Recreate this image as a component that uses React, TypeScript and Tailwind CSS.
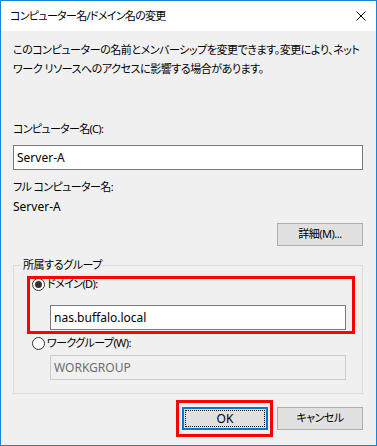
import React from "react";

const font = "[font-family:'Noto_Sans','Noto_Sans_CJK_JP',sans-serif] [font-feature-settings:'palt']";

const Radio = ({ checked }: { checked?: boolean }) => (
  <span className="flex h-[13px] w-[13px] shrink-0 items-center justify-center rounded-full border border-[#333333] bg-white">
    {checked && <span className="h-[7px] w-[7px] rounded-full bg-[#333333]" />}
  </span>
);

const WinButton = ({ children, isDefault }: { children: React.ReactNode; isDefault?: boolean }) =>
  isDefault ? (
    <div className="flex h-[23px] w-[86px] border-2 border-[#0078d7] bg-[#e1e1e1] p-[1px]">
      <div className="flex flex-1 items-center justify-center border border-dotted border-black text-[12px]">
        {children}
      </div>
    </div>
  ) : (
    <div className="flex h-[23px] w-[86px] items-center justify-center border border-[#adadad] bg-[#e1e1e1] tracking-[-0.5px]">
      {children}
    </div>
  );

export default function App() {
  return (
    <div className={`${font} flex h-[446px] w-[377px] flex-col border border-[#1883d7] bg-[#f0f0f0] text-[11px] text-black`}>
      <div className="flex h-[30px] shrink-0 items-center justify-between bg-white pl-[9px] pr-[9px]">
        <span className="leading-[16px] tracking-[-0.7px]">コンピューター名/ドメイン名の変更</span>
        <svg width="10" height="10" viewBox="0 0 10 10" className="mr-[1px]">
          <path d="M0.5 0.5 L9.5 9.5 M9.5 0.5 L0.5 9.5" stroke="#000" strokeWidth="1" />
        </svg>
      </div>

      <div className="flex flex-1 flex-col pl-[12px] pr-[13px]">
        <p className="whitespace-nowrap pt-[9px] leading-[19px] tracking-[-0.45px]">
          このコンピューターの名前とメンバーシップを変更できます。変更により、ネット
          <br />
          ワーク リソースへのアクセスに影響する場合があります。
        </p>

        <div className="mt-[43px] leading-[16px] tracking-[-0.7px]">コンピューター名(C):</div>
        <div className="mt-[8px] flex h-[25px] items-center border border-[#7a7a7a] bg-white pl-[3px] text-[12px]">Server-A</div>

        <div className="mt-[9px] leading-[16px] tracking-[-0.6px]">フル コンピューター名:</div>
        <div className="mt-[4px] text-[12px] leading-[16px]">Server-A</div>

        <div className="mt-[8px] flex justify-end">
          <WinButton>詳細(M)...</WinButton>
        </div>

        <div className="relative mt-[19px] border border-[#dcdcdc] pb-[13px] pl-[18px] pt-[10px]">
          <span className="absolute -top-[9px] left-[8px] bg-[#f0f0f0] px-[1px] leading-[16px] tracking-[-0.4px]">所属するグループ</span>

          <div className="flex h-[16px] items-center gap-[2px]">
            <Radio checked />
            <span className="leading-[16px] tracking-[-0.6px]">ドメイン(D):</span>
          </div>
          <div className="ml-[18px] mr-[16px] mt-[13px] flex h-[25px] items-center border border-[#7a7a7a] bg-white pl-[3px] text-[12px]">
            nas.buffalo.local
          </div>

          <div className="mt-[5px] flex h-[16px] items-center gap-[2px]">
            <Radio />
            <span className="leading-[16px] tracking-[-0.6px]">ワークグループ(W):</span>
          </div>
          <div className="ml-[18px] mr-[16px] mt-[4px] flex h-[25px] items-center border border-[#cccccc] bg-[#f0f0f0] pl-[3px] text-[12px] text-[#6d6d6d]">
            WORKGROUP
          </div>

          <div className="pointer-events-none absolute left-[13px] top-[10px] h-[58px] w-[328px] border-[3px] border-[#ff0000]" />
        </div>

        <div className="mt-[13px] flex justify-end gap-[9px]">
          <div className="relative">
            <WinButton isDefault>OK</WinButton>
            <div className="pointer-events-none absolute -bottom-[7px] -left-[6px] -right-[5px] -top-[7px] border-[3px] border-[#ff0000]" />
          </div>
          <WinButton>キャンセル</WinButton>
        </div>
      </div>
    </div>
  );
}
